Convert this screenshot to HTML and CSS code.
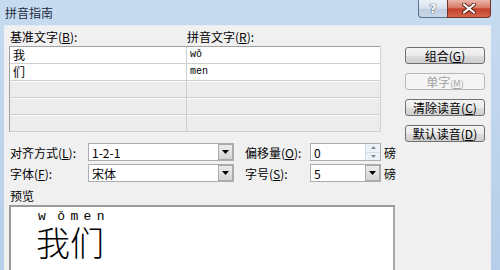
FILE: index.html
```html
<!DOCTYPE html>
<html lang="zh-CN">
<head>
<meta charset="UTF-8">
<title>拼音指南</title>
<link rel="stylesheet" href="styles.css">
</head>
<body>

<div class="titlebar">
  <span class="title">拼音指南</span>
  <div class="caption">
    <span class="cap help">?</span>
    <span class="cap close">
      <svg width="14" height="11" viewBox="0 0 14 11">
        <path d="M2 1.5 L12 9.5 M12 1.5 L2 9.5" stroke="#5a2018" stroke-width="4" stroke-linecap="round"/>
        <path d="M2 1.5 L12 9.5 M12 1.5 L2 9.5" stroke="#fff" stroke-width="2.2" stroke-linecap="round"/>
      </svg>
    </span>
  </div>
</div>

<div class="client">
  <div class="top">
    <div class="left">
      <div class="heads">
        <span class="head base">基准文字(<u>B</u>):</span>
        <span class="head">拼音文字(<u>R</u>):</span>
      </div>
      <div class="grid">
        <div class="cell">我</div>
        <div class="cell pin">wǒ</div>
        <div class="cell">们</div>
        <div class="cell pin">men</div>
        <div class="cell empty"></div>
        <div class="cell empty"></div>
        <div class="cell empty"></div>
        <div class="cell empty"></div>
        <div class="cell empty"></div>
        <div class="cell empty"></div>
      </div>
    </div>
    <!-- buttons on the right -->
    <div class="btns">
      <button class="btn">组合(<u>G</u>)</button>
      <button class="btn off">单字<small>(<u>M</u>)</small></button>
      <button class="btn">清除读音(<u>C</u>)</button>
      <button class="btn">默认读音(<u>D</u>)</button>
    </div>
  </div>

  <div class="opts">
    <div class="opt-row">
      <span class="lbl">对齐方式(<u>L</u>):</span>
      <div class="combo wide"><span>1-2-1</span><span class="arrow"><svg width="7" height="4" viewBox="0 0 7 4"><path d="M0 0 H7 L3.5 4 Z" fill="#000"/></svg></span></div>
      <span class="lbl2">偏移量(<u>O</u>):</span>
      <div class="combo small"><span>0</span>
        <span class="spin">
          <span class="spin-half"><svg width="5" height="3" viewBox="0 0 5 3"><path d="M0 3 H5 L2.5 0 Z" fill="#7d8da0"/></svg></span>
          <span class="spin-half"><svg width="5" height="3" viewBox="0 0 5 3"><path d="M0 0 H5 L2.5 3 Z" fill="#7d8da0"/></svg></span>
        </span>
      </div>
      <span class="unit">磅</span>
    </div>
    <div class="opt-row">
      <span class="lbl">字体(<u>F</u>):</span>
      <div class="combo wide"><span>宋体</span><span class="arrow"><svg width="7" height="4" viewBox="0 0 7 4"><path d="M0 0 H7 L3.5 4 Z" fill="#000"/></svg></span></div>
      <span class="lbl2">字号(<u>S</u>):</span>
      <div class="combo small"><span>5</span><span class="arrow"><svg width="7" height="4" viewBox="0 0 7 4"><path d="M0 0 H7 L3.5 4 Z" fill="#000"/></svg></span></div>
      <span class="unit">磅</span>
    </div>
  </div>

  <div class="prev-label">预览</div>
  <div class="preview">
    <div class="py"><span class="py-w">w</span>ǒmen</div>
    <div class="hz">我们</div>
  </div>
</div>

</body>
</html>
```

FILE: styles.css
```css
* {
  box-sizing: border-box;
}
body {
  margin: 0;
  width: 500px;
  height: 270px;
  overflow: hidden;
  background: linear-gradient(#c7dbf0, #b6cee9);
  font-family: "Noto Sans CJK SC", sans-serif;
  font-size: 12px;
  color: #000;
}
u {
  text-decoration: underline;
}
/* title bar */
.titlebar {
  height: 25px;
  display: flex;
  justify-content: space-between;
  align-items: flex-start;
  padding: 0 9px 0 5px;
}
.title {
  line-height: 25px;
  color: #1c2c40;
}
.caption {
  display: flex;
}
.cap {
  height: 18px;
  display: flex;
  align-items: center;
  justify-content: center;
  border: 1px solid #5d6f86;
  border-top: none;
}
.help {
  width: 29px;
  border-right: none;
  border-radius: 0 0 0 4px;
  background: linear-gradient(#eef3f9, #d6e0ed 50%, #bfcddf 51%, #cbd8e8);
  color: #fff;
  font-family: "DejaVu Sans", sans-serif;
  font-weight: bold;
  font-size: 13px;
  text-shadow: 0 0 1px #2d3b4d, 0 0 1px #2d3b4d;
}
.close {
  width: 44px;
  border-color: #70342a;
  border-radius: 0 0 4px 0;
  background: linear-gradient(#ebb6aa, #d97b66 45%, #c4412b 52%, #d4644d);
}
/* client area */
.client {
  margin: 0 9px 0 4px;
  height: 245px;
  overflow: hidden;
  background: #f0f0f0;
  border-top: 1px solid #e3ebf4;
  padding-left: 5px;
}
.top {
  display: flex;
}
.left {
  width: 371px;
}
.heads {
  display: flex;
  height: 20px;
  align-items: center;
}
.head {
  padding-left: 1px;
}
.head.base {
  width: 177px;
}
.grid {
  display: grid;
  grid-template-columns: 177px 194px;
  border-top: 1px solid #a0a0a0;
  border-left: 1px solid #a0a0a0;
}
.cell {
  height: 17px;
  line-height: 16px;
  padding-left: 3px;
  background: #fff;
  border-right: 1px solid #cfcfcf;
  border-bottom: 1px solid #cfcfcf;
}
.cell.pin {
  font-family: "Liberation Mono", monospace;
  font-size: 10px;
}
.cell.empty {
  background: #ececec;
  box-shadow: inset 0 1px #fafafa;
}
.btns {
  margin-left: 25px;
  padding-top: 21px;
  display: flex;
  flex-direction: column;
  gap: 9px;
}
.btn {
  width: 80px;
  height: 17px;
  padding: 0;
  border: 1px solid #707070;
  border-radius: 3px;
  background: linear-gradient(#f3f3f3, #ebebeb 50%, #dddddd 51%, #cfcfcf);
  font-family: inherit;
  font-size: 12px;
  line-height: 15px;
  color: #000;
}
.btn.off {
  color: #a3a3a3;
  border-color: #b4b8bb;
  background: #f4f4f4;
}
.btn small {
  font-size: 9px;
}
/* option rows */
.opts {
  margin-top: 1px;
  display: flex;
  flex-direction: column;
  gap: 3px;
}
.opt-row {
  display: flex;
  align-items: center;
  height: 18px;
}
.lbl {
  width: 79px;
  padding-left: 1px;
}
.lbl2 {
  width: 65px;
  margin-left: 11px;
}
.combo {
  height: 18px;
  border: 1px solid #abadb3;
  background: #fff;
  display: flex;
  align-items: center;
  justify-content: space-between;
  padding-left: 3px;
}
.combo.wide {
  width: 146px;
}
.combo.small {
  width: 71px;
}
.arrow {
  width: 15px;
  height: 16px;
  display: flex;
  align-items: center;
  justify-content: center;
  background: linear-gradient(#ececec, #d4d4d4);
  border: 1px solid #a9a9a9;
}
.spin {
  width: 15px;
  height: 16px;
  display: flex;
  flex-direction: column;
  border-left: 1px solid #d5dde6;
}
.spin-half {
  flex: 1;
  display: flex;
  align-items: center;
  justify-content: center;
  background: #eef2f6;
}
.spin-half + .spin-half {
  border-top: 1px solid #d5dde6;
}
.unit {
  margin-left: 3px;
}
/* preview */
.prev-label {
  margin-top: 5px;
  height: 18px;
  line-height: 18px;
  padding-left: 1px;
}
.preview {
  width: 386px;
  height: 66px;
  background: #fff;
  border-top: 2px solid #9a9a9a;
  border-left: 2px solid #9a9a9a;
  border-right: 2px solid #a8a8a8;
  padding: 3px 0 0 27px;
}
.py {
  font-family: "Liberation Mono", monospace;
  font-size: 13px;
  line-height: 14px;
  letter-spacing: 5.4px;
}
.py-w {
  margin-right: 6px;
}
.hz {
  margin-left: -2px;
  margin-top: 1px;
  font-size: 34px;
  line-height: 34px;
  font-weight: 300;
}
```
